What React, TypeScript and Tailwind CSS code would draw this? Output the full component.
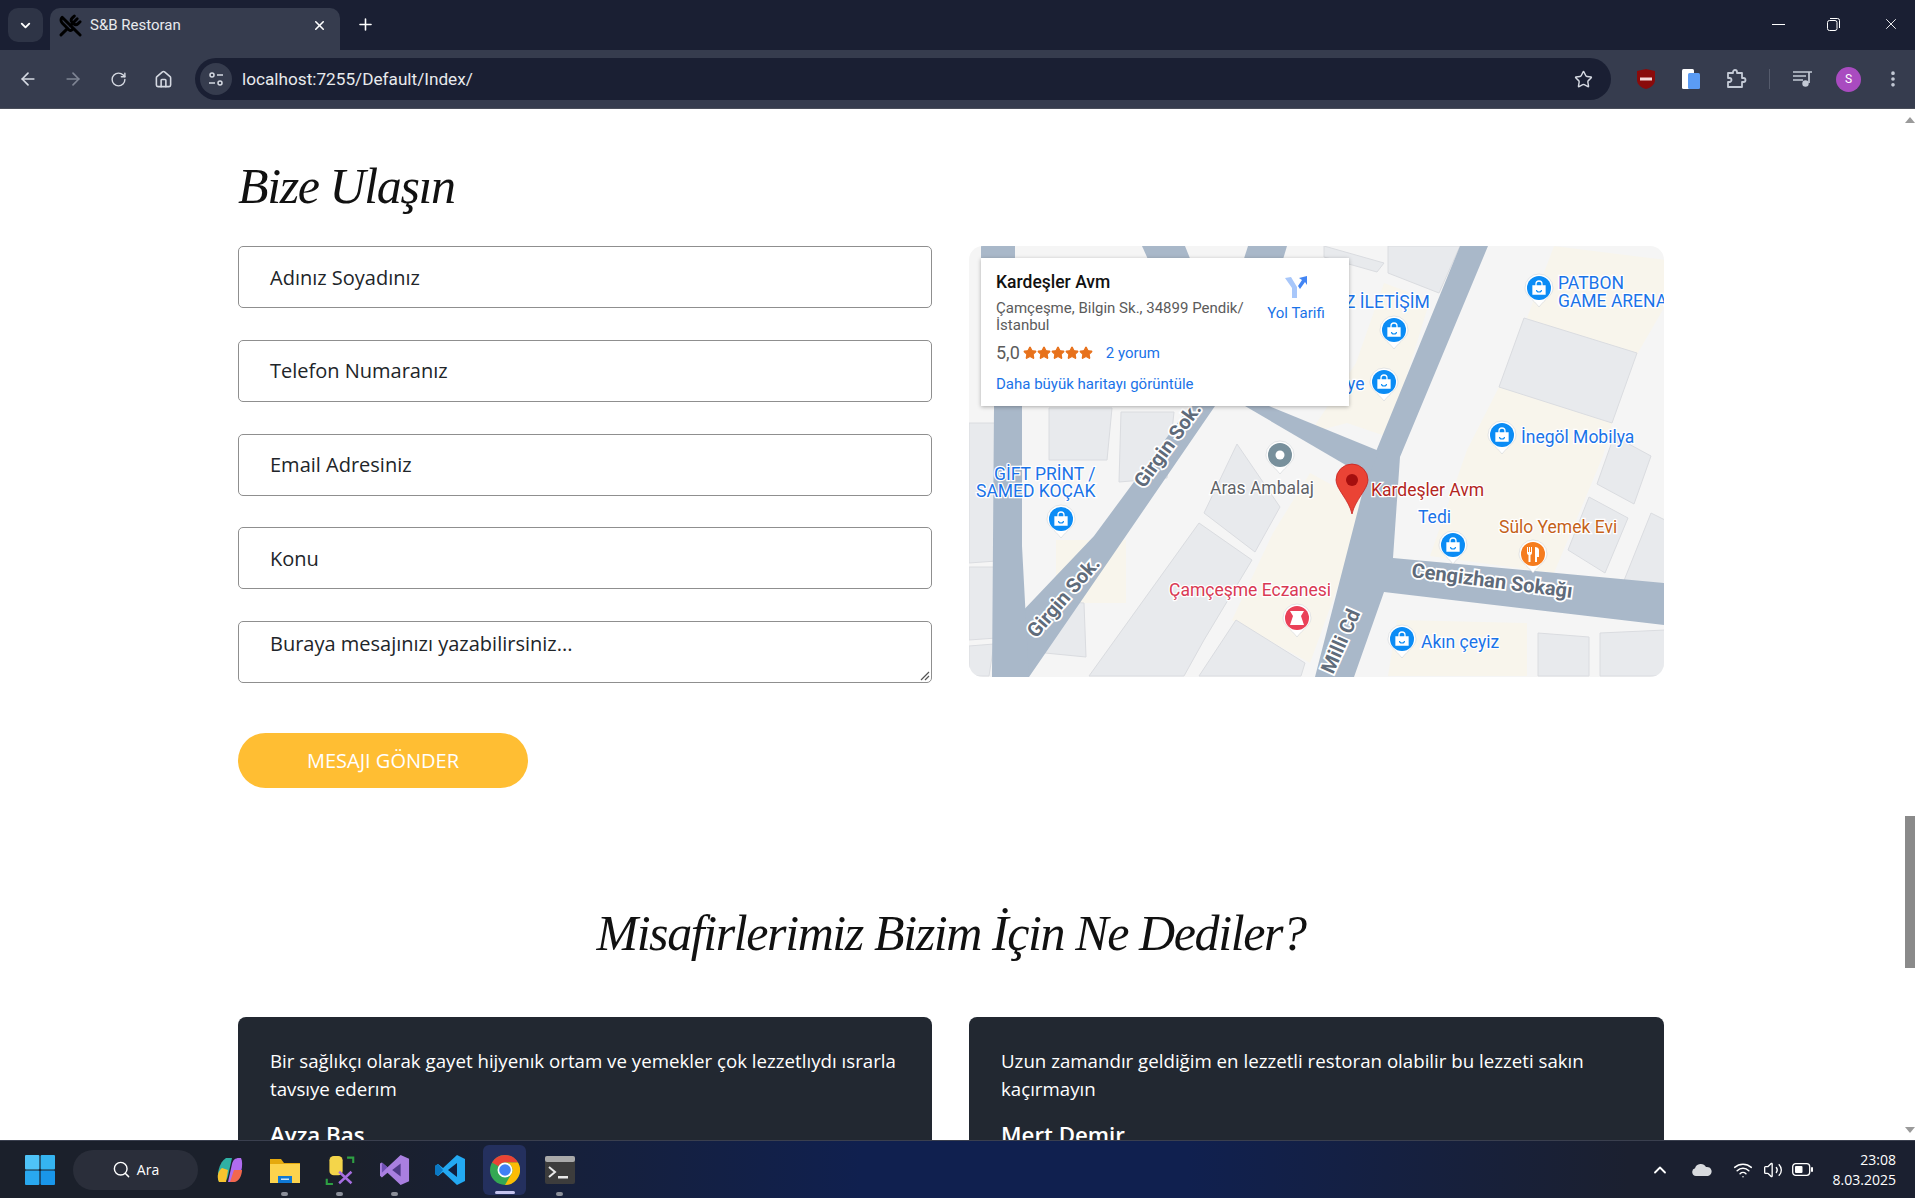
import { ArrowLeft, ArrowRight, ChevronDown, ChevronUp, EllipsisVertical, House, Plus, RotateCw, Search, Star, UtensilsCrossed, Volume2, Wifi, X } from 'lucide-react';
import type { ReactNode } from 'react';

const fields = ['Adınız Soyadınız', 'Telefon Numaranız', 'Email Adresiniz', 'Konu'];

const reviews = [
  { text: 'Bir sağlıkçı olarak gayet hijyenık ortam ve yemekler çok lezzetlıydı ısrarla tavsıye ederım', name: 'Ayza Baş' },
  { text: 'Uzun zamandır geldiğim en lezzetli restoran olabilir bu lezzeti sakın kaçırmayın', name: 'Mert Demir' },
];

const buildings = [
  '555,72 668,107 643,177 530,141',
  '268,198 311,261 286,306 235,267',
  '230,277 283,314 235,394 215,430 120,430',
  '267,374 336,417 332,430 230,430',
  '620,251 659,272 636,327 599,304',
  '682,267 696,274 696,351 654,337',
  '355,0 415,17 408,26 355,11',
  '419,0 491,0 470,47 419,27',
  '569,387 620,391 620,430 569,430',
  '631,387 696,384 696,430 631,430',
  '0,177 30,177 41,314 0,317',
  '0,321 37,321 41,391 0,394',
  '80,162 143,162 138,214 80,214',
  '152,166 205,166 198,232 150,236',
  '76,354 115,357 117,411 76,407',
  '645,190 682,210 665,258 628,238',
  '0,400 25,398 20,430 0,430',
];

const cream = [
  '341,227 396,257 392,277 341,417 263,374 304,287',
  '585,0 696,14 696,60 663,117 558,72',
  '498,204 530,141 643,177 634,210 585,327 461,310',
  '415,37 461,54 419,191 378,177 341,187 387,117',
  '87,294 157,294 157,357 87,357',
  '428,374 558,377 558,430 419,430',
];

const roads = [
  '491,0 519,0 431,211 424,312 696,337 696,379 415,346 385,431 346,431 399,225',
  '276,160 300,160 410,205 399,232',
  '221,160 246,160 150,300 60,431 23,431 25,395 125,290',
  '25,160 53,160 53,300 60,431 23,431',
  '12,0 46,0 46,30 12,30',
  '173,0 216,0 240,60 200,60',
  '279,0 318,0 300,60 260,60',
];

const pins = [
  { x: 570, y: 42, color: '#0b8cf5', kind: 'bag' },
  { x: 425, y: 84, color: '#0b8cf5', kind: 'bag' },
  { x: 415, y: 136, color: '#0b8cf5', kind: 'bag' },
  { x: 533, y: 189, color: '#0b8cf5', kind: 'bag' },
  { x: 484, y: 299, color: '#0b8cf5', kind: 'bag' },
  { x: 92, y: 273, color: '#0b8cf5', kind: 'bag' },
  { x: 433, y: 393, color: '#0b8cf5', kind: 'bag' },
  { x: 311, y: 209, color: '#78909c', kind: 'dot' },
  { x: 564, y: 308, color: '#f57c1f', kind: 'food' },
  { x: 328, y: 372, color: '#ea4158', kind: 'pharmacy' },
];

const labels = [
  { x: 589, y: 43, text: 'PATBON', fill: '#1a73e8' },
  { x: 589, y: 61, text: 'GAME ARENA', fill: '#1a73e8' },
  { x: 376, y: 62, text: 'Z İLETİŞİM', fill: '#1a73e8' },
  { x: 378, y: 144, text: 'ye', fill: '#1a73e8' },
  { x: 552, y: 197, text: 'İnegöl Mobilya', fill: '#1a73e8' },
  { x: 25, y: 234, text: 'GİFT PRİNT /', fill: '#1a73e8' },
  { x: 7, y: 251, text: 'SAMED KOÇAK', fill: '#1a73e8' },
  { x: 241, y: 248, text: 'Aras Ambalaj', fill: '#5f6368' },
  { x: 402, y: 250, text: 'Kardeşler Avm', fill: '#b3261e' },
  { x: 449, y: 277, text: 'Tedi', fill: '#1a73e8' },
  { x: 530, y: 287, text: 'Sülo Yemek Evi', fill: '#c5621a' },
  { x: 200, y: 350, text: 'Çamçeşme Eczanesi', fill: '#d93954' },
  { x: 452, y: 402, text: 'Akın çeyiz', fill: '#1a73e8' },
];

const streets = [
  { x: 442, y: 331, angle: 7.4, text: 'Cengizhan Sokağı' },
  { x: 364, y: 429, angle: -66, text: 'Milli Cd' },
  { x: 175, y: 243, angle: -54, text: 'Girgin Sok.' },
  { x: 67, y: 393, angle: -49, text: 'Girgin Sok.' },
];

const dockIcons: { key: string; dot: boolean; icon: ReactNode }[] = [
  {
    key: 'copilot',
    dot: false,
    icon: (
      <svg width="28" height="28" viewBox="0 0 28 28">
        <path d="M10 2h6l-4 18c-1 4-3 6-7 6H3C0 20 3 6 10 2z" fill="#2fb0a4" />
        <path d="M3 26c-3-6 0-12 3-14l6 2-2 12z" fill="#f7c32e" />
        <path d="M18 26h-6l4-18c1-4 3-6 7-6h2c3 6 0 20-7 24z" fill="#b06cf0" />
        <path d="M14 26l4-12 8 0c0 5-3 12-8 12z" fill="#f2674e" />
      </svg>
    ),
  },
  {
    key: 'explorer',
    dot: true,
    icon: (
      <svg width="32" height="28" viewBox="0 0 32 28">
        <path d="M1 3h11l3 4h16v20H1z" fill="#e5a90e" />
        <rect x="1" y="8" width="30" height="19" fill="#fcd34d" />
        <rect x="9" y="20" width="14" height="7" fill="#0f78d4" />
        <rect x="12" y="22.5" width="8" height="1.5" fill="#cbe4f7" />
      </svg>
    ),
  },
  {
    key: 'ssms',
    dot: true,
    icon: (
      <svg width="30" height="30" viewBox="0 0 32 34">
        <path d="M24 3h7v6M1 27v6h7M31 27v0" stroke="#2ea043" strokeWidth="2.400" fill="none" />
        <rect x="4" y="1" width="15" height="22" rx="5" fill="#f4d54a" />
        <path d="M15 19l14 13M29 19L15 32" stroke="#a66ee0" strokeWidth="2.800" />
      </svg>
    ),
  },
  {
    key: 'vs',
    dot: true,
    icon: (
      <svg width="30" height="34" viewBox="0 0 32 34">
        <path d="M22 1l9 4v24l-9 4-14-13-6 5-2-2V10l2-1 6 5z" fill="#a97fe0" />
        <path d="M22 10v14l-9-7z" fill="#4f3a87" />
        <path d="M2 9l6 5-6 6z" fill="#6f4fb5" />
      </svg>
    ),
  },
  {
    key: 'vscode',
    dot: false,
    icon: (
      <svg width="30" height="32" viewBox="0 0 30 32">
        <path d="M22 1l8 4v22l-8 4L8 18l-5 4-3-2v-8l3-2 5 4z" fill="#23a9f2" />
        <path d="M22 9v14l-9-7z" fill="#10203f" />
        <path d="M0 12l3-2 5 6-5 6-3-2z" fill="#0a78c4" />
      </svg>
    ),
  },
];

function Pin({ x, y, color, kind }: { x: number; y: number; color: string; kind: string }) {
  return (
    <g transform={`translate(${x} ${y})`}>
      <path d="M-14 0a14 14 0 1 1 28 0c0 7-8 11-14 19c-6-8-14-12-14-19z" fill="#fff" stroke="#c8ccd0" strokeWidth="0.5" />
      <circle r="12" fill={color} />
      {kind === 'bag' && (
        <g fill="none" stroke="#fff" strokeWidth="1.3">
          <path d="M-6-2h12v8h-12z" fill="#fff" />
          <path d="M-3-2v-2a3 3 0 0 1 6 0v2" />
          <path d="M-2.500 2a2.500 2 0 0 0 5 0" stroke={color} strokeWidth="1.100" />
        </g>
      )}
      {kind === 'dot' && <circle r="4.500" fill="#fff" />}
      {kind === 'food' && <path d="M-6-7v6a2 2 0 0 0 1.500 2v7h2V1A2 2 0 0 0-1-1v-6h-1v5h-1v-5h-1v5h-1v-5zM2-7v15h2V3h2v-7c0-2-2-3-4-3z" fill="#fff" />}
      {kind === 'pharmacy' && <path d="M-7-7h14l-3 5 3 9h-14l3-9z" fill="#fff" />}
    </g>
  );
}

function MapView() {
  return (
    <div className="relative h-[431px] overflow-hidden rounded-[14px] bg-[#f5f5f5]">
      <svg className="h-full w-full" viewBox="0 0 695 431">
        {cream.map((p) => <polygon key={p} points={p} fill="#f8f5ec" />)}
        {buildings.map((p) => <polygon key={p} points={p} fill="#e8eaed" stroke="#dadce0" strokeWidth="1" />)}
        {roads.map((p) => <polygon key={p} points={p} fill="#a9b8c9" />)}
        {streets.map((s) => (
          <text
            key={s.x}
            transform={`translate(${s.x} ${s.y}) rotate(${s.angle})`}
            className="fill-[#5f6b7a] stroke-white stroke-[3.5px] [paint-order:stroke] text-[20px] font-bold [font-family:Roboto,sans-serif]"
          >
            {s.text}
          </text>
        ))}
        {labels.map((l) => (
          <text
            key={l.text}
            x={l.x}
            y={l.y}
            fill={l.fill}
            className="stroke-white stroke-[2.5px] [paint-order:stroke] text-[17.5px] [font-family:Roboto,sans-serif]"
          >
            {l.text}
          </text>
        ))}
        {pins.map((p) => <Pin key={`${p.x}-${p.y}`} {...p} />)}
        <path d="M383 268c-3-14-16-25-16-34a16 16 0 0 1 32 0c0 9-13 20-16 34z" fill="#ea4335" stroke="#c5221f" strokeWidth="0.8" />
        <circle cx="383" cy="234" r="6" fill="#a50e0e" />
      </svg>

      {/* info card sits over the map */}
      <div className="absolute left-[12px] top-[12px] flex h-[148px] w-[368px] justify-between bg-white pl-[15px] pr-[17px] pt-[13px] shadow-[0_1px_4px_rgba(0,0,0,0.3)] [font-family:Roboto,sans-serif]">
        <div className="w-[262px]">
          <div className="text-[17.5px] font-medium leading-[22px] text-[#111]">Kardeşler Avm</div>
          <div className="mt-[7px] text-[15px] leading-[17px] text-[#5b5b5b]">Çamçeşme, Bilgin Sk., 34899 Pendik/ İstanbul</div>
          <div className="mt-[8px] flex items-center text-[15px]">
            <span className="text-[18px] leading-[22px] text-[#5b5b5b]">5,0</span>
            <span className="ml-[3px] flex">
              {[0, 1, 2, 3, 4].map((i) => <Star key={i} size={14} fill="#e7711b" stroke="#e7711b" />)}
            </span>
            <span className="ml-[13px] text-[#1a73e8]">2 yorum</span>
          </div>
          <div className="mt-[10px] whitespace-nowrap text-[15px] leading-[18px] text-[#1a73e8]">Daha büyük haritayı görüntüle</div>
        </div>
        <div className="flex w-[72px] flex-col items-center pt-[4px]">
          <svg width="24" height="24" viewBox="0 0 24 24">
            <path d="M1 3l6-1 6 10v11H8V13z" fill="#a8c7fa" />
            <path d="M14 11l4-6-3-2 8-2v9l-2-3-5 7z" fill="#4285f4" />
          </svg>
          <div className="mt-[3px] whitespace-nowrap text-[15px] text-[#1a73e8]">Yol Tarifi</div>
        </div>
      </div>
    </div>
  );
}

function ChromeBar() {
  return (
    <div className="text-[#d5d9e2] [font-family:Roboto,sans-serif]">
      <div className="flex h-[50px] items-end bg-[#1a1f33]">
        <div className="mb-[8px] ml-[8px] flex h-[34px] w-[35px] items-center justify-center rounded-[10px] bg-[#2e3446]">
          <ChevronDown size={15} strokeWidth={3} className="text-white" />
        </div>
        <div className="ml-[7px] flex h-[42px] w-[290px] items-center rounded-t-[10px] bg-[#363c4e] pb-[7px] pl-[9px] pr-[13px]">
          <UtensilsCrossed size={23} strokeWidth={3} className="text-black" />
          <span className="ml-[8px] flex-1 text-[15px] text-[#e8eaed]">S&amp;B Restoran</span>
          <X size={15} strokeWidth={2.5} className="text-white" />
        </div>
        <Plus size={19} strokeWidth={2} className="mb-[16px] ml-[16px] text-white" />
        <div className="flex-1" />
        <div className="mb-[19px] mr-[42px] flex items-center gap-[42px] text-white">
          <div className="h-px w-[13px] bg-white" />
          <svg width="13" height="13" viewBox="0 0 13 13" fill="none" stroke="#fff">
            <rect x="0.5" y="2.5" width="9.5" height="10" rx="2" />
            <path d="M3 .5h7.500a2 2 0 0 1 2 2V10" />
          </svg>
        </div>
        <X size={18} strokeWidth={1.2} className="mb-[17px] mr-[15px] text-white" />
      </div>

      <div className="flex h-[59px] items-center border-b border-[#4a4e5a] bg-[#363c4e]">
        <ArrowLeft size={20} className="ml-[18px]" />
        <ArrowRight size={20} className="ml-[25px] text-[#7f8594]" />
        <RotateCw size={17} className="ml-[27px]" />
        <House size={19} className="ml-[27px]" />
        <div className="ml-[22px] flex h-[42px] w-[1416px] items-center rounded-full bg-[#1a1f33] pl-[5px] pr-[18px]">
          <div className="flex h-[32px] w-[32px] items-center justify-center rounded-full bg-[#363c4e]">
            <svg width="16" height="16" viewBox="0 0 16 16" fill="none" stroke="#d5d9e2" strokeWidth="1.5">
              <circle cx="4" cy="4" r="2" />
              <path d="M9 4h6M1 12h6" />
              <circle cx="12" cy="12" r="2" />
            </svg>
          </div>
          <span className="ml-[10px] flex-1 pt-[2px] text-[17.2px] text-[#e8eaed]">localhost:7255/Default/Index/</span>
          <Star size={19} strokeWidth={1.8} />
        </div>
        <svg className="ml-[25px]" width="20" height="22" viewBox="0 0 20 22">
          <path d="M1 3l9-2 9 2v9c0 5-5 8-9 9-4-1-9-4-9-9z" fill="#8a0b0b" />
          <rect x="4" y="9.5" width="12" height="3" fill="#f4d8d8" />
        </svg>
        <svg className="ml-[25px]" width="20" height="22" viewBox="0 0 20 22">
          <rect x="1" y="1" width="12" height="20" rx="1.5" fill="#fff" />
          <rect x="7" y="5" width="12" height="16" rx="1.5" fill="#5b9cf5" />
        </svg>
        <svg className="ml-[25px]" width="22" height="22" viewBox="0 0 22 22" fill="none" stroke="#c4cad6" strokeWidth="1.8" strokeLinejoin="round">
          <path d="M2 5h5v-1a2 2 0 0 1 4 0v1h5v5h1.500a2 2 0 0 1 0 4H16v5H2v-5h1.500a2 2 0 0 0 0-4H2z" />
        </svg>
        <div className="ml-[21px] h-[20px] w-px bg-[#555b6c]" />
        <svg className="ml-[23px]" width="20" height="18" viewBox="0 0 20 18" fill="none" stroke="#c4cad6" strokeWidth="1.7">
          <path d="M0 2h19M0 6h13M0 10h10" />
          <path d="M16 2v11" />
          <circle cx="12.5" cy="13.5" r="3.2" fill="#c4cad6" stroke="none" />
        </svg>
        <div className="ml-[23px] flex h-[25px] w-[25px] items-center justify-center rounded-full bg-[#a94bc0] text-[12px] text-white">S</div>
        <EllipsisVertical size={20} strokeWidth={2.4} className="ml-[22px] text-[#c4cad6]" />
      </div>
    </div>
  );
}

function Taskbar() {
  return (
    <div className="flex h-[58px] items-center border-t border-[#3a3f4e] bg-[linear-gradient(90deg,#1b202b_0%,#1b202b_18%,#10204f_45%,#10204f_62%,#1b2030_85%,#1b2030_100%)] text-white [font-family:'Open_Sans',sans-serif]">
      <svg className="ml-[25px]" width="30" height="30" viewBox="0 0 30 30">
        <rect x="0" y="0" width="14.4" height="14.4" rx="1" fill="#4fc3f7" />
        <rect x="15.6" y="0" width="14.4" height="14.4" rx="1" fill="#35b4f0" />
        <rect x="0" y="15.6" width="14.4" height="14.4" rx="1" fill="#29a8ef" />
        <rect x="15.6" y="15.6" width="14.4" height="14.4" rx="1" fill="#1996ea" />
      </svg>
      <div className="ml-[18px] flex h-[40px] w-[125px] items-center justify-center gap-[6px] rounded-full bg-[#2a2e3a] text-[14px]">
        <Search size={19} strokeWidth={1.8} />
        <span>Ara</span>
      </div>
      <div className="ml-[4px] flex">
        {dockIcons.map((d) => (
          <div key={d.key} className="relative flex h-[56px] w-[55px] items-center justify-center">
            {d.icon}
            {d.dot && <div className="absolute bottom-[2px] h-[4px] w-[7px] rounded-full bg-[#8b8f99]" />}
          </div>
        ))}
        <div className="relative mx-[6px] flex h-[50px] w-[43px] items-center justify-center self-center rounded-[6px] bg-[#24305e]">
          <svg width="30" height="30" viewBox="0 0 30 30">
            <circle cx="15" cy="15" r="15" fill="#34a853" />
            <path d="M15 0a15 15 0 0 1 13 7.500H15a7.500 7.500 0 0 0-6.500 3.750L2 7.500A15 15 0 0 1 15 0z" fill="#ea4335" />
            <path d="M28 7.500A15 15 0 0 1 15 30l6.500-11.250A7.500 7.500 0 0 0 15 7.500z" fill="#fbbc04" />
            <circle cx="15" cy="15" r="7.500" fill="#fff" />
            <circle cx="15" cy="15" r="5.800" fill="#3f80f5" />
          </svg>
          <div className="absolute bottom-[1px] h-[3px] w-[20px] rounded-full bg-[#c4c4ee]" />
        </div>
        <div className="relative flex h-[56px] w-[55px] items-center justify-center">
          <svg width="30" height="28" viewBox="0 0 30 28">
            <rect width="30" height="28" rx="2" fill="#3c3c3c" />
            <rect width="30" height="6" rx="2" fill="#a9a9a9" />
            <path d="M4 11l6 5-6 5" stroke="#e8e8e8" strokeWidth="2" fill="none" />
            <rect x="13" y="20" width="10" height="2.500" fill="#e8e8e8" />
          </svg>
          <div className="absolute bottom-[2px] h-[4px] w-[7px] rounded-full bg-[#8b8f99]" />
        </div>
      </div>
      <div className="flex-1" />
      <ChevronUp size={20} strokeWidth={2.2} className="mr-[22px]" />
      <svg className="mr-[21px]" width="20" height="13" viewBox="0 0 20 13">
        <path d="M4 13a4 4 0 0 1-1-7.800A6 6 0 0 1 14 4a4.500 4.500 0 0 1 2 9z" fill="#d8dade" />
      </svg>
      <Wifi size={20} strokeWidth={1.8} className="mr-[10px]" />
      <Volume2 size={20} strokeWidth={1.6} className="mr-[9px]" />
      <svg className="mr-[20px]" width="21" height="13" viewBox="0 0 21 13">
        <rect x="0.7" y="0.7" width="17" height="11.600" rx="3" fill="none" stroke="#fff" strokeWidth="1.3" />
        <rect x="3" y="3" width="7.500" height="7" rx="1" fill="#fff" />
        <rect x="19" y="4" width="2" height="5" rx="1" fill="#fff" />
      </svg>
      <div className="mr-[19px] text-right text-[14px] leading-[20px]">
        <div>23:08</div>
        <div>8.03.2025</div>
      </div>
    </div>
  );
}

export default function App() {
  return (
    <div className="flex h-screen w-screen flex-col overflow-hidden bg-white">
      <ChromeBar />
      <div className="flex min-h-0 flex-1">
        <main className="min-w-0 flex-1 overflow-hidden pl-[238px] pr-[241px] pt-[47px] text-[#212529] [font-family:'Open_Sans',sans-serif]">
          <h2 className="mb-[30px] h-[60px] text-[50px] italic leading-[60px] tracking-[-1.4px] text-[#111] [font-family:'Liberation_Serif',serif]">Bize Ulaşın</h2>
          <div className="grid grid-cols-[694px_695px] gap-x-[37px]">
            <div>
              <div className="flex flex-col gap-[31.75px]">
                {fields.map((f) => (
                  <div key={f} className="flex h-[62px] items-center rounded-[5px] border border-[#8f8f8f] pl-[31px] pt-[1px] text-[20px]">{f}</div>
                ))}
                <div className="relative h-[62px] rounded-[5px] border border-[#8f8f8f] pl-[31px] pt-[7px] text-[20px] leading-[30px]">
                  Buraya mesajınızı yazabilirsiniz...
                  <svg className="absolute bottom-[1px] right-[1px]" width="10" height="10" viewBox="0 0 10 10" stroke="#555" strokeWidth="1.200">
                    <path d="M1 9l8-8M5 9l4-4" />
                  </svg>
                </div>
              </div>
              <button className="mt-[50px] h-[55px] w-[290px] rounded-full bg-[#ffbe33] text-[20px] text-white">MESAJI GÖNDER</button>
            </div>
            <MapView />
          </div>
          <h2 className="mb-[54px] mt-[115px] h-[60px] text-center text-[50px] italic leading-[60px] tracking-[-1.4px] text-[#111] [font-family:'Liberation_Serif',serif]">Misafirlerimiz Bizim İçin Ne Dediler?</h2>
          <div className="grid grid-cols-[694px_695px] gap-x-[37px]">
            {reviews.map((r) => (
              <div key={r.name} className="rounded-[8px] bg-[#222831] pb-[32px] pl-[32px] pr-[31px] pt-[30px] text-white">
                <p className="text-[18.7px] leading-[28px]">{r.text}</p>
                <h6 className="mt-[19px] text-[22.3px] font-semibold leading-[26px]">{r.name}</h6>
              </div>
            ))}
          </div>
        </main>
        {/* scrollbar */}
        <div className="flex w-[10px] flex-col items-center bg-white">
          <div className="mt-[8px] h-0 w-0 border-x-[5px] border-b-[6px] border-x-transparent border-b-[#9a9a9a]" />
          <div className="mt-[693px] h-[152px] w-full bg-[#8a8a8a]" />
          <div className="mt-[159px] h-0 w-0 border-x-[5px] border-t-[6px] border-x-transparent border-t-[#9a9a9a]" />
        </div>
      </div>
      <Taskbar />
    </div>
  );
}
